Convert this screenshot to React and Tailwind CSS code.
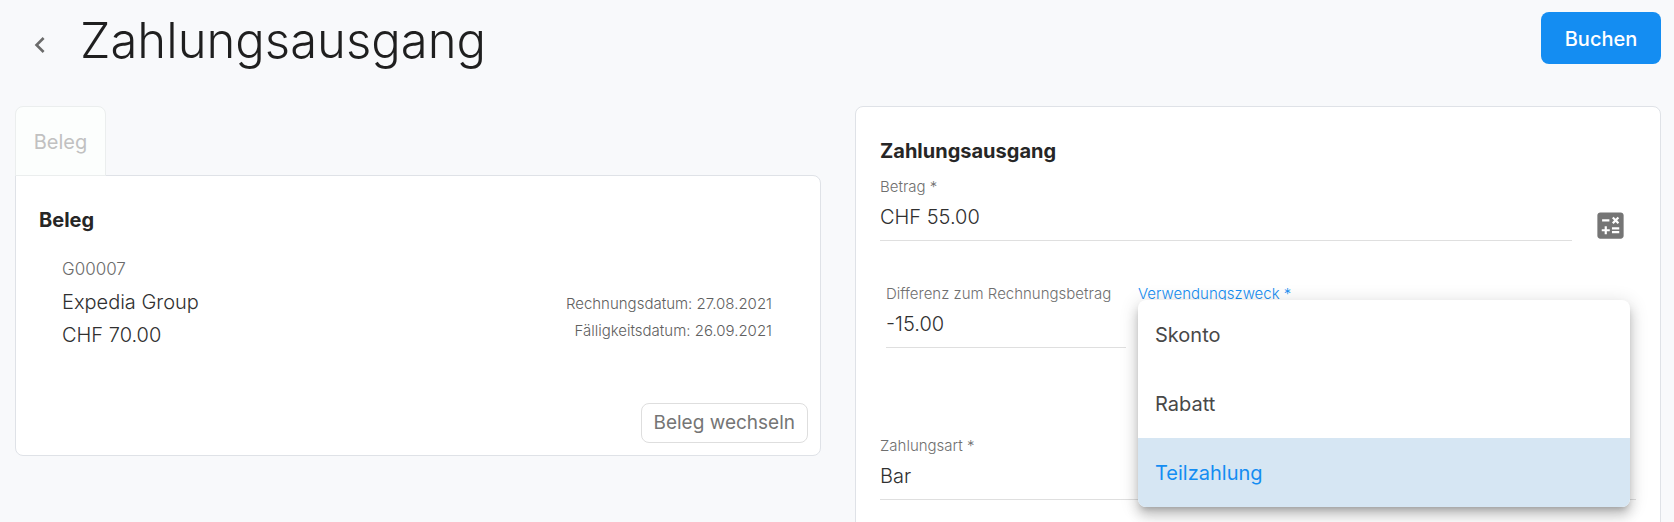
import { useState } from "react";
import { MdCalculate, MdChevronLeft } from "react-icons/md";

const purposes = ["Skonto", "Rabatt", "Teilzahlung"];

const labelClass = "block truncate text-[15px] leading-5 font-light";
const controlClass =
  "block h-10 w-full appearance-none bg-transparent text-left text-xl font-light text-[#303030] outline-none";

function Field({ id, label, children, className = "" }) {
  return (
    <div className={`border-b border-[#dfdfdf] pb-[3px] ${className}`}>
      <label htmlFor={id} className={`${labelClass} text-[#6f6f6f]`}>
        {label}
      </label>
      {children}
    </div>
  );
}

function Header() {
  return (
    <header className="flex items-start justify-between">
      <div className="flex items-center">
        <button type="button" aria-label="Zurück" className="ml-[9px] pt-2 text-[#6b6b6b]">
          <MdChevronLeft size={32} />
        </button>
        <h1 className="ml-6 text-[49px] leading-[58px] font-light text-[#1f1f1f]">Zahlungsausgang</h1>
      </div>
      <button type="button" className="h-13 w-30 rounded-lg bg-[#148df2] pt-0.5 text-xl font-medium text-white">
        Buchen
      </button>
    </header>
  );
}

function Receipt() {
  return (
    <section>
      <button
        type="button"
        disabled
        className="relative -mb-px block h-[70px] w-[91px] rounded-t-lg border border-[#ebeeee] bg-[#fcfefd] pt-0.5 text-xl text-[#c1c1c1]"
      >
        Beleg
      </button>
      <div className="rounded-lg rounded-tl-none border border-[#dfe2e7] bg-white pt-[30px] pb-3">
        <h2 className="px-[23px] text-xl leading-7 font-bold text-[#262626]">Beleg</h2>
        <div className="mt-[19px] flex items-end justify-between pr-12 pl-[46px]">
          <div className="text-xl leading-[33px] font-light text-[#303030]">
            <p className="text-[17px] leading-[33px] text-[#6b6b6b]">G00007</p>
            <p>Expedia Group</p>
            <p>CHF 70.00</p>
          </div>
          <div className="pb-2 text-right text-[15px] leading-[27px] font-light text-[#606060]">
            <p>Rechnungsdatum: 27.08.2021</p>
            <p>Fälligkeitsdatum: 26.09.2021</p>
          </div>
        </div>
        <div className="mt-[51px] flex justify-end px-3">
          <button type="button" className="h-10 rounded-lg border border-[#dedede] px-3 text-[19px] text-[#757575]">
            Beleg wechseln
          </button>
        </div>
      </div>
    </section>
  );
}

function Payment() {
  const [purpose, setPurpose] = useState("Teilzahlung");
  const [open, setOpen] = useState(true);

  return (
    <section className="rounded-lg border border-[#dfe2e7] bg-white px-6 pt-[30px] pb-12">
      <h2 className="text-xl leading-7 font-bold text-[#262626]">Zahlungsausgang</h2>

      <div className="mt-3 flex items-end">
        <Field id="amount" label="Betrag *" className="flex-1">
          <input id="amount" defaultValue="CHF 55.00" className={controlClass} />
        </Field>
        <button
          type="button"
          aria-label="Rechner"
          className="ml-3 flex h-8 w-[52px] items-center justify-center text-[#757575]"
        >
          <MdCalculate size={35} />
        </button>
      </div>

      <div className="mt-[43px] grid grid-cols-3 gap-x-3 px-1.5">
        <Field id="difference" label="Differenz zum Rechnungsbetrag">
          <input id="difference" defaultValue="-15.00" className={controlClass} />
        </Field>
        <div className="relative col-span-2 border-b border-[#dfdfdf] pb-[3px]">
          <label htmlFor="purpose" className={`${labelClass} text-[#148df2]`}>
            Verwendungszweck *
          </label>
          <button
            id="purpose"
            type="button"
            aria-haspopup="listbox"
            aria-expanded={open}
            onClick={() => setOpen(!open)}
            className={controlClass}
          >
            {open ? "" : purpose}
          </button>
          {open && (
            <ul
              role="listbox"
              aria-label="Verwendungszweck"
              className="absolute inset-x-0 top-4 z-10 overflow-hidden rounded-lg bg-white shadow-[0_5px_6px_-3px_rgba(0,0,0,0.22),0_9px_12px_1px_rgba(0,0,0,0.14),0_3px_18px_2px_rgba(0,0,0,0.12)]"
            >
              {purposes.map((name) => (
                <li
                  key={name}
                  role="option"
                  aria-selected={name === purpose}
                  onClick={() => {
                    setPurpose(name);
                    setOpen(false);
                  }}
                  className={
                    name === purpose
                      ? "h-[69px] cursor-pointer bg-[#d6e6f3] px-[17px] text-xl leading-[70px] text-[#148df2]"
                      : "h-[69px] cursor-pointer px-[17px] text-xl leading-[70px] text-[#484848]"
                  }
                >
                  {name}
                </li>
              ))}
            </ul>
          )}
        </div>
      </div>

      <Field id="method" label="Zahlungsart *" className="mt-[88px]">
        <select id="method" defaultValue="Bar" className={controlClass}>
          <option>Bar</option>
        </select>
      </Field>
    </section>
  );
}

export default function App() {
  return (
    <div className="min-h-screen bg-[#f8f9fb] pt-3 pr-[13px] pl-[15px] font-['Inter',sans-serif]">
      <Header />
      <main className="mt-9 grid grid-cols-2 items-start gap-x-[34px]">
        <Receipt />
        <Payment />
      </main>
    </div>
  );
}
